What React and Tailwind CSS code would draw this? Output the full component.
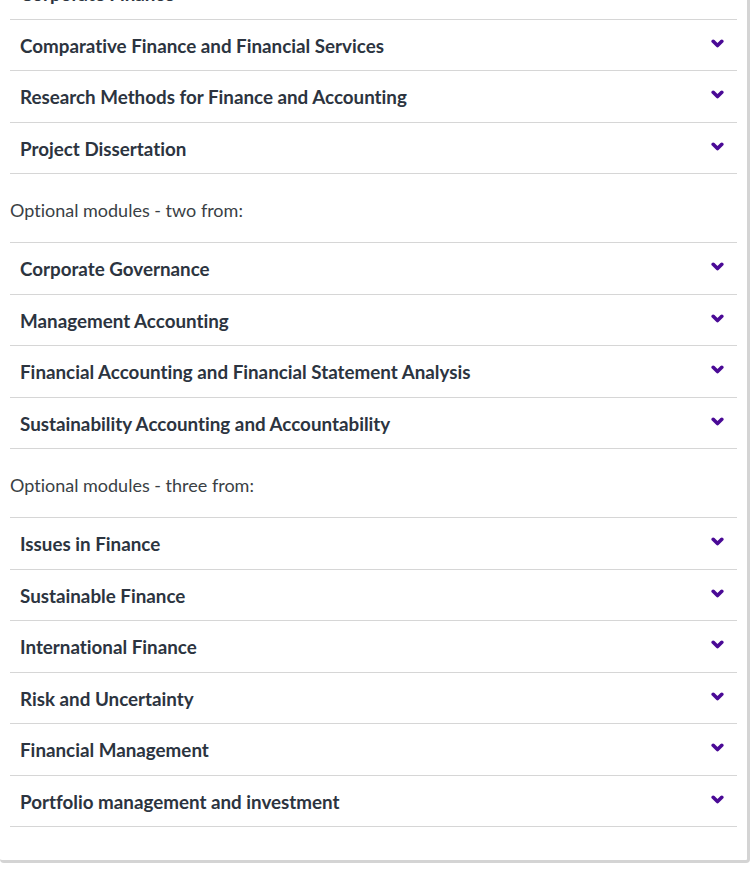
const groups = [
  {
    label: null,
    items: [
      'Corporate Finance',
      'Comparative Finance and Financial Services',
      'Research Methods for Finance and Accounting',
      'Project Dissertation',
    ],
  },
  {
    label: 'Optional modules - two from:',
    items: [
      'Corporate Governance',
      'Management Accounting',
      'Financial Accounting and Financial Statement Analysis',
      'Sustainability Accounting and Accountability',
    ],
  },
  {
    label: 'Optional modules - three from:',
    items: [
      'Issues in Finance',
      'Sustainable Finance',
      'International Finance',
      'Risk and Uncertainty',
      'Financial Management',
      'Portfolio management and investment',
    ],
  },
];

// chunky chevron-down
function Chevron() {
  return (
    <svg width="13" height="10" viewBox="0 0 13 10" className="shrink-0 -mt-[2px]">
      <polyline
        points="2.2,2.3 6.5,6.6 10.8,2.3"
        fill="none"
        stroke="#4a0a96"
        strokeWidth="3.6"
        strokeLinecap="round"
        strokeLinejoin="round"
      />
    </svg>
  );
}

function ModuleRow({ title }) {
  return (
    <div className="h-[51.5px] flex items-center justify-between pl-[10px] pr-[13px] border-b border-[#d6d6d6]">
      <span className="text-[18.8px] font-bold text-[#2c3440] [font-variant-ligatures:none] pt-[2px]">{title}</span>
      <Chevron />
    </div>
  );
}

export default function App() {
  return (
    <div className="bg-white min-h-screen" style={{ fontFamily: 'Lato, "Open Sans", sans-serif' }}>
      <div className="-mt-[32px] w-[750px] bg-white border-r-[3px] border-b-[3px] border-[#d4d4d4] rounded-br-[4px] rounded-bl-[4px] px-[10px] pb-[33px]">
        {groups.map((g, i) => (
          <div key={i}>
            {g.label && (
              <p className="pt-[24px] pb-[20px] text-[18px] leading-[24px] text-[#3a3f45] border-b border-[#d6d6d6] [font-variant-ligatures:none]">
                {g.label}
              </p>
            )}
            {g.items.map((t) => (
              <ModuleRow key={t} title={t} />
            ))}
          </div>
        ))}
      </div>
    </div>
  );
}
